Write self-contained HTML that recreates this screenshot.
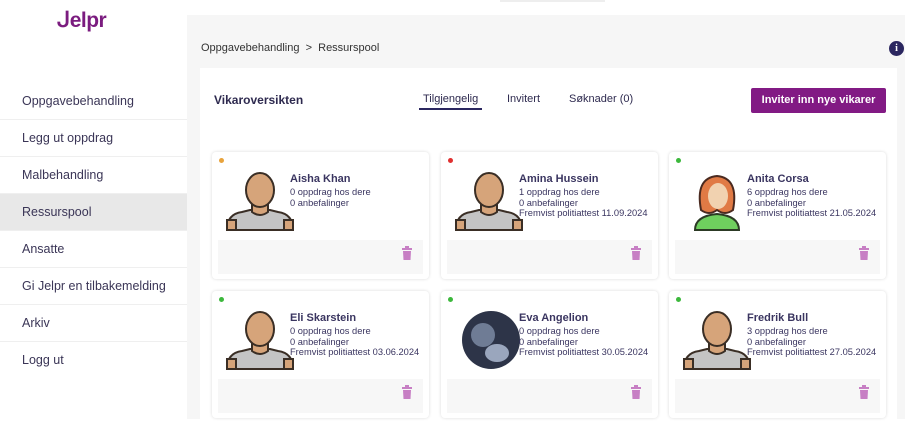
<!DOCTYPE html>
<html><head><meta charset="utf-8"><style>
*{margin:0;padding:0;box-sizing:border-box}
body{width:917px;height:441px;overflow:hidden;background:#fff;font-family:"Liberation Sans",sans-serif;color:#2e2a4f;position:relative}
.side{position:absolute;left:0;top:0;width:187px;height:441px;background:#fff}
.logo{position:absolute;left:57px;top:8px;font-size:21px;font-weight:bold;color:#7b1c7f;letter-spacing:-0.5px}
.nav{position:absolute;left:0;top:83px;width:187px}
.nav div{height:37px;line-height:36px;padding-left:22px;font-size:12.5px;color:#3a3556;border-bottom:1px solid #efefef}
.nav div.act{background:#e8e8e8}
.main{position:absolute;left:187px;top:15px;width:718px;height:404px;background:#f6f6f6}
.crumb{position:absolute;left:201px;top:42px;font-size:11px;color:#333}
.info{position:absolute;left:889px;top:41px;width:15px;height:15px;border-radius:50%;background:#2b2760;color:#fff;font-size:10px;font-weight:bold;text-align:center;line-height:15px;font-family:"Liberation Serif",serif}
.panel{position:absolute;left:200px;top:68px;width:697px;height:351px;background:#fff}
.title{position:absolute;left:214px;top:93px;font-size:12px;font-weight:bold;color:#2e2a4f}
.tab{position:absolute;top:93px;font-size:11px;color:#2e2a4f}
.btn{position:absolute;left:751px;top:88px;width:135px;height:25px;background:#821a84;color:#fff;font-size:11px;font-weight:bold;text-align:center;line-height:25px;border-radius:2px}
.card{position:absolute;width:217px;height:127px;background:#fff;border-radius:4px;box-shadow:0 0 3px rgba(0,0,0,.15)}
.dot{position:absolute;left:7px;top:6px;width:5px;height:5px;border-radius:50%}
.av{position:absolute;left:12px;top:18px}
.txt{position:absolute;left:78px;top:21px;font-size:9.3px;line-height:10.5px;color:#3a3560}
.txt b{display:block;font-size:11px;font-weight:bold;margin-bottom:2px;line-height:12px}
.foot{position:absolute;left:6px;top:88px;width:205px;height:34px;background:#f7f7f7}
.trash{position:absolute;right:10px;top:6px}
</style></head><body>
<div class="side">
<div class="logo">ᒍelpr</div>
<div class="nav">
<div>Oppgavebehandling</div><div>Legg ut oppdrag</div><div>Malbehandling</div><div class="act">Ressurspool</div><div>Ansatte</div><div>Gi Jelpr en tilbakemelding</div><div>Arkiv</div><div style="border:none">Logg ut</div>
</div></div>
<div class="main"></div>
<div style="position:absolute;left:500px;top:0;width:105px;height:2px;background:#eee"></div>
<div class="crumb">Oppgavebehandling &nbsp;&gt;&nbsp; Ressurspool</div>
<div class="info">i</div>
<div class="panel"></div>
<div class="title">Vikaroversikten</div>
<div class="tab" style="left:423px">Tilgjengelig</div>
<div style="position:absolute;left:419px;top:108px;width:63px;height:2px;background:#2b2760"></div>
<div class="tab" style="left:507px">Invitert</div>
<div class="tab" style="left:569px">Søknader (0)</div>
<div class="btn">Inviter inn nye vikarer</div>

<svg width="0" height="0" style="position:absolute"><defs>
<g id="man"><path d="M3 60 Q3 44 18 42 L26 40 L46 40 L54 42 Q69 44 69 60 Z" fill="#c4c4c4" stroke="#3a2e25" stroke-width="2"/><rect x="3" y="50" width="9" height="10" fill="#d6a47a" stroke="#3a2e25" stroke-width="2"/><rect x="60" y="50" width="9" height="10" fill="#d6a47a" stroke="#3a2e25" stroke-width="2"/><path d="M28 32 L28 42 Q36 48 44 42 L44 32 Z" fill="#d6a47a" stroke="#3a2e25" stroke-width="2"/><ellipse cx="36" cy="20" rx="14" ry="17" fill="#d6a47a" stroke="#3a2e25" stroke-width="2"/></g>
<g id="tr"><rect x="1" y="2" width="10" height="2" fill="#c77fc4"/><rect x="4" y="0" width="4" height="2" fill="#c77fc4"/><path d="M2 5 H10 L9.5 14 H2.5 Z" fill="#c77fc4"/></g>
</defs></svg>

<div class="card" style="left:212px;top:152px"><div class="dot" style="background:#e8a33c"></div><svg class="av" width="72" height="62"><use href="#man"/></svg><div class="txt"><b>Aisha Khan</b>0 oppdrag hos dere<br>0 anbefalinger</div><div class="foot"><svg class="trash" width="12" height="15"><use href="#tr"/></svg></div></div>
<div class="card" style="left:441px;top:152px"><div class="dot" style="background:#e03030"></div><svg class="av" width="72" height="62"><use href="#man"/></svg><div class="txt"><b>Amina Hussein</b>1 oppdrag hos dere<br>0 anbefalinger<br>Fremvist politiattest 11.09.2024</div><div class="foot"><svg class="trash" width="12" height="15"><use href="#tr"/></svg></div></div>
<div class="card" style="left:669px;top:152px"><div class="dot" style="background:#3cb83c"></div><svg class="av" width="72" height="62"><path d="M14 60 Q14 46 36 44 Q58 46 58 60 Z" fill="#6fcf5e" stroke="#2c3a25" stroke-width="2"/><path d="M20 40 Q14 8 36 6 Q58 8 52 40 Q44 46 36 40 Q28 46 20 40 Z" fill="#e07a45" stroke="#4a2a20" stroke-width="2"/><ellipse cx="37" cy="26" rx="10" ry="13" fill="#f1d2b0"/></svg><div class="txt"><b>Anita Corsa</b>6 oppdrag hos dere<br>0 anbefalinger<br>Fremvist politiattest 21.05.2024</div><div class="foot"><svg class="trash" width="12" height="15"><use href="#tr"/></svg></div></div>
<div class="card" style="left:212px;top:291px"><div class="dot" style="background:#3cb83c"></div><svg class="av" width="72" height="62"><use href="#man"/></svg><div class="txt"><b>Eli Skarstein</b>0 oppdrag hos dere<br>0 anbefalinger<br>Fremvist politiattest 03.06.2024</div><div class="foot"><svg class="trash" width="12" height="15"><use href="#tr"/></svg></div></div>
<div class="card" style="left:441px;top:291px"><div class="dot" style="background:#3cb83c"></div><svg class="av" width="72" height="62"><circle cx="38" cy="31" r="29" fill="#2d3448"/><circle cx="30" cy="26" r="12" fill="#6f7c95"/><ellipse cx="44" cy="44" rx="12" ry="9" fill="#9aa6bd"/></svg><div class="txt"><b>Eva Angelion</b>0 oppdrag hos dere<br>0 anbefalinger<br>Fremvist politiattest 30.05.2024</div><div class="foot"><svg class="trash" width="12" height="15"><use href="#tr"/></svg></div></div>
<div class="card" style="left:669px;top:291px"><div class="dot" style="background:#3cb83c"></div><svg class="av" width="72" height="62"><use href="#man"/></svg><div class="txt"><b>Fredrik Bull</b>3 oppdrag hos dere<br>0 anbefalinger<br>Fremvist politiattest 27.05.2024</div><div class="foot"><svg class="trash" width="12" height="15"><use href="#tr"/></svg></div></div>
</body></html>
